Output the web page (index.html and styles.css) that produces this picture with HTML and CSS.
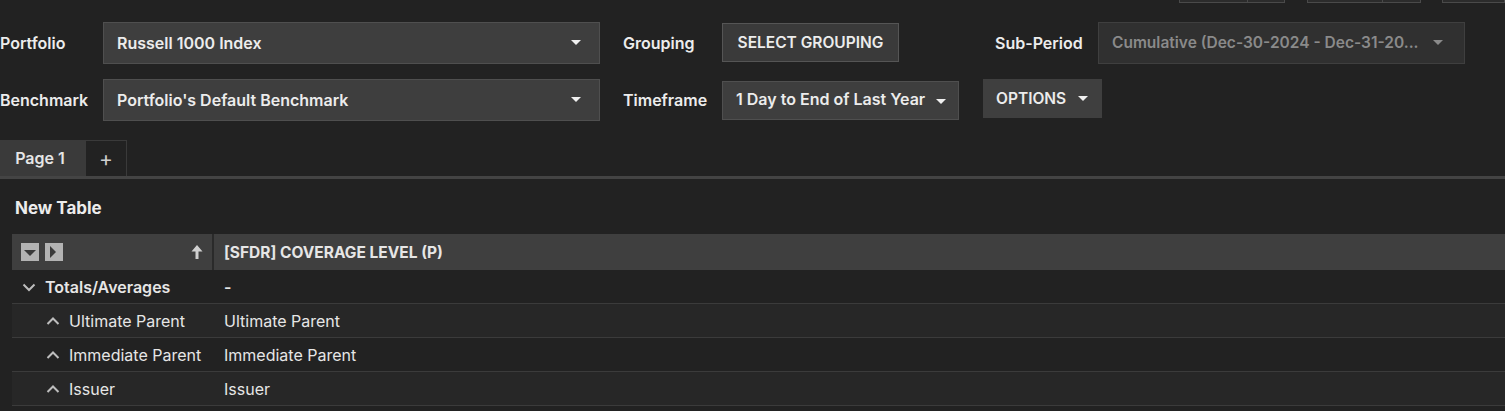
FILE: index.html
```html
<!DOCTYPE html>
<html lang="en">
<head>
  <meta charset="UTF-8" />
  <title>Portfolio Analysis</title>
  <link rel="stylesheet" href="styles.css">
</head>
<body>

  <!-- toolbar buttons cut off at the top -->
  <div class="topbar">
    <div class="tb-btn tb-1"><span class="tb-main"></span><span class="tb-side"></span></div>
    <div class="tb-btn tb-2"><span class="tb-main"></span><span class="tb-side"></span></div>
    <div class="tb-btn tb-3"></div>
  </div>

  <section class="controls">
    <div class="ctrl-row">
      <label class="lbl lbl-main">Portfolio</label>
      <div class="select sel-main">Russell 1000 Index <span class="caret"></span></div>
      <label class="lbl lbl-mid">Grouping</label>
      <button class="btn btn-grouping">SELECT GROUPING</button>
      <label class="lbl lbl-sub">Sub-Period</label>
      <div class="select sel-sub disabled">Cumulative (Dec-30-2024 - Dec-31-20... <span class="caret"></span></div>
    </div>
    <div class="ctrl-row row2">
      <label class="lbl lbl-main">Benchmark</label>
      <div class="select sel-main">Portfolio's Default Benchmark <span class="caret"></span></div>
      <label class="lbl lbl-mid">Timeframe</label>
      <div class="select sel-time">1 Day to End of Last Year <span class="caret"></span></div>
      <button class="btn btn-options">OPTIONS <span class="caret"></span></button>
    </div>
  </section>

  <nav class="tabs">
    <div class="tab active">Page 1</div>
    <div class="tab add">+</div>
  </nav>

  <h3 class="table-title">New Table</h3>

  <div class="grid">
    <div class="row head">
      <div class="cell first">
        <span class="sq"><span class="tri-down"></span></span>
        <span class="sq"><span class="tri-right"></span></span>
        <svg class="up" width="12" height="16" viewBox="0 0 12 16"><path d="M6 1 L11.5 7.5 H7.5 V15 H4.5 V7.5 H0.5 Z" fill="#d0d0d0"/></svg>
      </div>
      <div class="cell">[SFDR] COVERAGE LEVEL (P)</div>
    </div>
    <div class="row total">
      <div class="cell first">
        <svg class="chev" width="14" height="10" viewBox="0 0 14 10"><path d="M1.5 2.5 L7 8 L12.5 2.5" fill="none" stroke="#bdbdbd" stroke-width="2"/></svg>
        Totals/Averages
      </div>
      <div class="cell">-</div>
    </div>
    <div class="row child odd">
      <div class="cell first">
        <svg class="chev" width="14" height="10" viewBox="0 0 14 10"><path d="M1.5 8 L7 2.5 L12.5 8" fill="none" stroke="#bdbdbd" stroke-width="2"/></svg>
        Ultimate Parent
      </div>
      <div class="cell">Ultimate Parent</div>
    </div>
    <div class="row child">
      <div class="cell first">
        <svg class="chev" width="14" height="10" viewBox="0 0 14 10"><path d="M1.5 8 L7 2.5 L12.5 8" fill="none" stroke="#bdbdbd" stroke-width="2"/></svg>
        Immediate Parent
      </div>
      <div class="cell">Immediate Parent</div>
    </div>
    <div class="row child odd">
      <div class="cell first">
        <svg class="chev" width="14" height="10" viewBox="0 0 14 10"><path d="M1.5 8 L7 2.5 L12.5 8" fill="none" stroke="#bdbdbd" stroke-width="2"/></svg>
        Issuer
      </div>
      <div class="cell">Issuer</div>
    </div>
  </div>

</body>
</html>
```

FILE: styles.css
```css
body {
  margin: 0;
  background-color: #222222;
  color: #e6e6e6;
  font-family: Inter, Roboto, "Liberation Sans", sans-serif;
  font-size: 16px;
  overflow: hidden;
}
.topbar {
  display: flex;
  height: 3px;
  padding-left: 1179px;
}
.tb-btn {
  display: flex;
  height: 2px;
  border: 1px solid #4a4a4a;
  border-top: none;
  background: #2c2c2c;
}
.tb-btn span {
  display: block;
  height: 100%;
}
.tb-side {
  border-left: 1px solid #4a4a4a;
}
.tb-1 .tb-main { width: 67px; }
.tb-1 .tb-side { width: 36px; }
.tb-2 { margin-left: 22px; }
.tb-2 .tb-main { width: 74px; }
.tb-2 .tb-side { width: 37px; }
.tb-3 { margin-left: 21px; width: 80px; }

.controls {
  padding-top: 19px;
}
.ctrl-row {
  display: flex;
  align-items: center;
  height: 42px;
}
.row2 {
  margin-top: 15px;
}
.lbl {
  font-weight: 600;
  color: #ececec;
  padding-bottom: 1px;
}
.lbl-main { width: 103px; }
.lbl-mid { width: 99px; margin-left: 23px; }
.lbl-sub { width: 103px; margin-left: 96px; }
.select {
  box-sizing: border-box;
  display: flex;
  align-items: center;
  justify-content: space-between;
  height: 42px;
  padding: 0 18px 1px 13px;
  background: #3e3e3e;
  border: 1px solid #4f4f4f;
  font-weight: 600;
  color: #ececec;
  white-space: nowrap;
}
.sel-main { width: 497px; }
.sel-sub {
  width: 367px;
  padding-right: 21px;
  font-size: 15.5px;
}
.sel-time {
  width: 237px;
  height: 39px;
  padding-right: 12px;
  padding-bottom: 3px;
}
.disabled {
  background: #303030;
  border-color: #3f3f3f;
  color: #8a8a8a;
}
.caret {
  display: inline-block;
  width: 0;
  height: 0;
  border-left: 5px solid transparent;
  border-right: 5px solid transparent;
  border-top: 5px solid #f0f0f0;
}
.sel-time .caret { margin-top: 6px; }
.disabled .caret { border-top-color: #8a8a8a; }
.btn {
  box-sizing: border-box;
  font-family: inherit;
  font-size: 15.5px;
  font-weight: 600;
  color: #ececec;
  background: #3a3a3a;
  border: 1px solid #555555;
  cursor: pointer;
}
.btn-grouping {
  width: 177px;
  height: 39px;
  margin-top: -2px;
}
.btn-options {
  display: flex;
  align-items: center;
  gap: 12px;
  width: 119px;
  height: 39px;
  margin-left: 24px;
  margin-top: -3px;
  padding: 0 13px;
  background: #3f3f3f;
  border: none;
}

.tabs {
  display: flex;
  margin-top: 19px;
  border-bottom: 3px solid #444444;
}
.tab {
  box-sizing: border-box;
  height: 36px;
  display: flex;
  align-items: center;
  justify-content: center;
  font-weight: 600;
}
.tab.active {
  width: 85px;
  background: #3a3a3a;
  padding-right: 5px;
}
.tab.add {
  width: 42px;
  border: 1px solid #3a3a3a;
  border-bottom: none;
  font-size: 21px;
  font-weight: 400;
  color: #cfcfcf;
}

.table-title {
  margin: 20px 0 0 15px;
  font-size: 17px;
  font-weight: 700;
  line-height: 19px;
  color: #ececec;
}

.grid {
  margin: 16px 0 0 12px;
}
.row {
  box-sizing: border-box;
  display: flex;
  height: 34px;
  align-items: center;
  border-bottom: 1px solid #3b3b3b;
}
.cell {
  display: flex;
  align-items: center;
  height: 100%;
  padding-left: 10px;
  flex: 1;
}
.cell.first {
  flex: none;
  width: 202px;
  box-sizing: border-box;
}
.row.head {
  height: 36px;
  background: #3f3f3f;
  border-bottom: none;
  font-size: 15.5px;
  font-weight: 700;
}
.row.head .cell.first {
  border-right: 2px solid #2a2a2a;
  padding-left: 9px;
}
.sq {
  display: flex;
  align-items: center;
  justify-content: center;
  width: 18px;
  height: 18px;
  margin-right: 6px;
  background: #b3b3b3;
}
.tri-down {
  border-left: 6px solid transparent;
  border-right: 6px solid transparent;
  border-top: 6px solid #3a3a3a;
  margin-top: 2px;
}
.tri-right {
  border-top: 6px solid transparent;
  border-bottom: 6px solid transparent;
  border-left: 6px solid #3a3a3a;
  margin-right: 2px;
}
.up {
  margin-left: auto;
  margin-right: 9px;
}
.row.total {
  font-weight: 600;
}
.chev {
  margin-right: 9px;
}
.row.child .cell.first {
  padding-left: 34px;
}
.row.odd {
  background: #272727;
}
```
